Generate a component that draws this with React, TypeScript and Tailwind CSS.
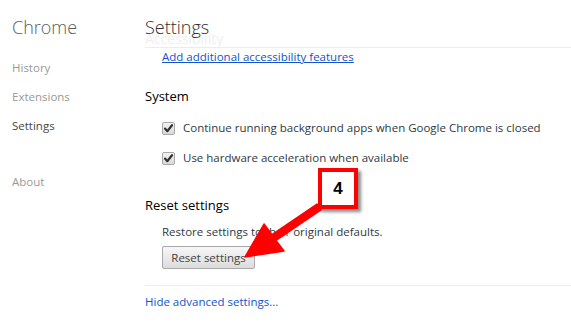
import React from 'react';

function Checkbox() {
    return <svg width="13" height="13" viewBox="0 0 13 13" className="shrink-0">
        <defs>
            <linearGradient id="cb" x1="0" y1="0" x2="0" y2="1">
                <stop offset="0" stopColor="#f4f4f4" />
                <stop offset="1" stopColor="#d8d8d8" />
            </linearGradient>
        </defs>
        <rect x="0.5" y="0.5" width="12" height="12" rx="1.5" fill="url(#cb)" stroke="#a8a8a8" />
        <path d="M3 6.6 L5.3 9.2 L10 3.2" fill="none" stroke="#333" strokeWidth="2.2" strokeLinecap="round" strokeLinejoin="round" />
    </svg>;
}

function CheckRow({ label, className }: { label: string; className?: string }) {
    return <div className={`flex items-center h-[20px] pl-[17px] gap-[8px] ${className ?? ''}`}>
        <Checkbox />
        <span className="text-[11.5px] text-[#303942]">{label}</span>
    </div>;
}

function Callout() {
    return <>
        <svg className="absolute top-0 left-0 pointer-events-none" width="571" height="329" viewBox="0 0 571 329">
            <polygon
                points="245,257 264,224 272,234.6 317,204 321,210 276,240.4 284,251"
                fill="#ff0000"
                stroke="#ff0000"
                strokeWidth="1.5"
                strokeLinejoin="round"
            />
        </svg>
        <div className="absolute left-[318px] top-[168px] w-[40px] h-[41px] border-[4px] border-[#ff0000] bg-white shadow-[3px_3px_3px_rgba(0,0,0,0.45)] flex items-center justify-center">
            <span className="text-[17px] font-bold text-black font-['Liberation_Sans',sans-serif]">4</span>
        </div>
    </>;
}

export default function App() {
    return <div className="relative w-[571px] h-[329px] bg-white overflow-hidden flex font-['Open_Sans',sans-serif]">
        <aside className="w-[145px] shrink-0 pl-[12px] pt-[14px] flex flex-col">
            <div className="text-[18px] leading-[26px] font-light text-[#5c5c5c]">Chrome</div>
            <div className="mt-[13px] text-[11.5px] leading-[29px] text-[#999]">History</div>
            <div className="text-[11.5px] leading-[29px] text-[#999]">Extensions</div>
            <div className="text-[11.5px] leading-[29px] text-[#464646]">Settings</div>
            <div className="mt-[27px] text-[11.5px] leading-[29px] text-[#999]">About</div>
        </aside>

        <main className="flex-1 pt-[14px] flex flex-col">
            <div className="relative pb-[7px] border-b border-[#ececec]">
                <div className="absolute left-0 top-[16px] text-[14px] leading-[18px] text-[#f0f0f0]">Accessibility</div>
                <div className="relative text-[18px] leading-[26px] font-light text-[#303030]">Settings</div>
            </div>

            <a className="block pl-[17px] text-[11.5px] leading-[18px] text-[#1155cc] underline">Add additional accessibility features</a>

            <h3 className="mt-[20px] text-[13px] leading-[20px] text-[#000]">System</h3>
            <CheckRow className="mt-[12px]" label="Continue running background apps when Google Chrome is closed" />
            <CheckRow className="mt-[10px]" label="Use hardware acceleration when available" />

            <h3 className="mt-[27px] text-[13px] leading-[20px] text-[#000]">Reset settings</h3>
            <div className="mt-[8px] pl-[17px] text-[11.5px] leading-[18px] text-[#303942]">Restore settings to their original defaults.</div>
            <div className="mt-[5px] pl-[17px] flex">
                <button className="w-[93px] h-[23px] rounded-[2px] border border-[#a9a9a9] bg-gradient-to-b from-[#f7f7f7] to-[#dcdcdc] text-[11.5px] leading-[21px] text-[#444]">
                    Reset settings
                </button>
            </div>

            <div className="mt-[16px] pt-[7px] border-t border-[#ececec] text-[11.5px] leading-[18px]">
                <a className="block text-[#1155cc]">Hide advanced settings...</a>
            </div>
        </main>

        <Callout />
    </div>;
}
